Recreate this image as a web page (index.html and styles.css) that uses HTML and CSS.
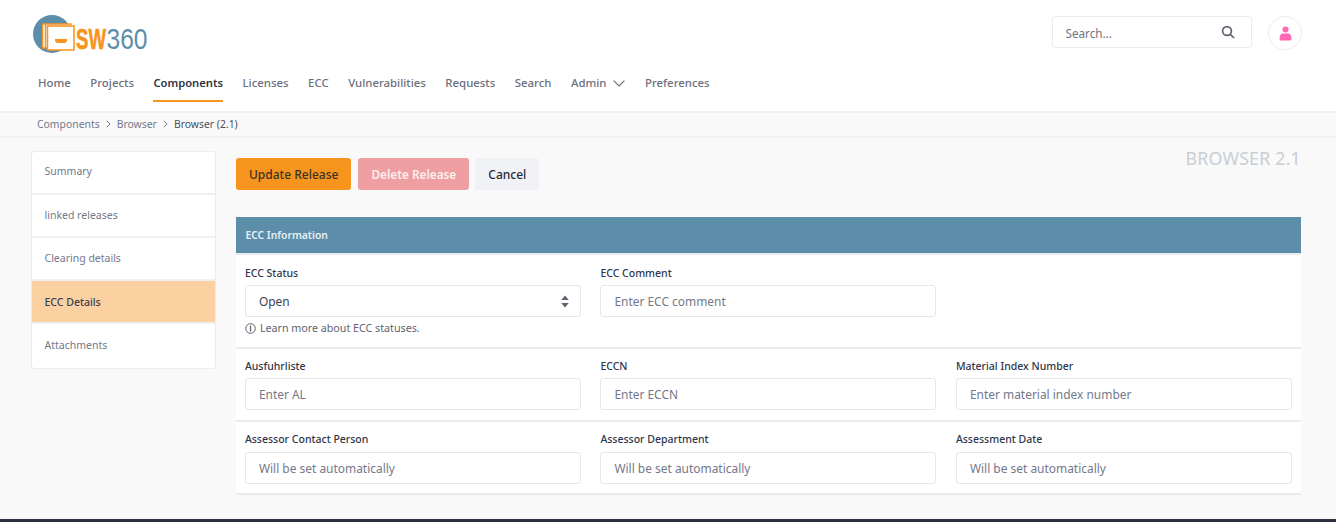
FILE: index.html
```html
<!DOCTYPE html>
<html lang="en">
<head>
<meta charset="utf-8">
<title>SW360</title>
<link rel="stylesheet" href="styles.css">
</head>
<body>
<header class="header">
  <div class="top">
    <svg class="logo" width="116" height="40" viewBox="0 0 116 40">
      <circle cx="19" cy="19" r="19" fill="#5d8ea9"/>
      <path d="M9.500 9 H38 V33 H9.500 Z" fill="#f7f3ec" stroke="#f7941d" stroke-width="1.300"/>
      <path d="M12.500 9 V33" stroke="#f7941d" stroke-width="1.300"/>
      <path d="M14.500 11 H41 V35 H14.500 Z" fill="#fff" stroke="#f7941d" stroke-width="1.500"/>
      <path d="M22 24 H34 V25 Q34 28 31 28 H25 Q22 28 22 25 Z" fill="#f7941d"/>
      <text class="logo-sw" transform="translate(43 34) scale(.62 1)">SW</text>
      <text class="logo-num" transform="translate(73.500 34) scale(.82 1)">360</text>
    </svg>
    <div class="top-right">
      <div class="search">
        <span class="search-text">Search...</span>
        <svg width="14" height="14" viewBox="0 0 14 14" fill="none" stroke="#5f6370" stroke-width="1.700"><circle cx="6" cy="6" r="4.400"/><path d="M9.300 9.300 L13 13"/></svg>
      </div>
      <div class="avatar">
        <svg width="13" height="15" viewBox="0 0 13 15" fill="#ff69b4"><circle cx="6.500" cy="3.400" r="3"/><path d="M0.500 13 Q0.500 7.400 4 7.400 H9 Q12.500 7.400 12.500 13 Q12.500 14.500 11 14.500 H2 Q0.500 14.500 0.500 13 Z"/></svg>
      </div>
    </div>
  </div>
  <nav class="nav">
    <a class="nav-item">Home</a>
    <a class="nav-item">Projects</a>
    <a class="nav-item active">Components</a>
    <a class="nav-item">Licenses</a>
    <a class="nav-item">ECC</a>
    <a class="nav-item">Vulnerabilities</a>
    <a class="nav-item">Requests</a>
    <a class="nav-item">Search</a>
    <a class="nav-item">Admin
      <svg class="chev" width="12" height="7" viewBox="0 0 12 7" fill="none" stroke="#6b6f7c" stroke-width="1.200"><path d="M0.600 0.600 L6 6 L11.400 0.600"/></svg>
    </a>
    <a class="nav-item">Preferences</a>
  </nav>
</header>
<div class="crumbs">
  <span>Components</span>
  <svg width="5" height="8" viewBox="0 0 5 8" fill="none" stroke="#74788a" stroke-width="1"><path d="M0.800 0.800 L4 4 L0.800 7.200"/></svg>
  <span>Browser</span>
  <svg width="5" height="8" viewBox="0 0 5 8" fill="none" stroke="#74788a" stroke-width="1"><path d="M0.800 0.800 L4 4 L0.800 7.200"/></svg>
  <span class="crumb-current">Browser (2.1)</span>
</div>
<main class="main">
  <aside class="side">
    <a class="side-item">Summary</a>
    <a class="side-item">linked releases</a>
    <a class="side-item">Clearing details</a>
    <a class="side-item current">ECC Details</a>
    <a class="side-item">Attachments</a>
  </aside>
  <section class="content">
    <div class="toolbar">
      <div class="buttons">
        <button class="btn btn-update">Update Release</button>
        <button class="btn btn-delete">Delete Release</button>
        <button class="btn btn-cancel">Cancel</button>
      </div>
      <div class="page-title">BROWSER 2.1</div>
    </div>
    <div class="panel">
      <div class="panel-head">ECC Information</div>
      <div class="row row-status">
        <div class="field">
          <label class="label">ECC Status</label>
          <div class="control select">Open
            <svg class="updown" width="8" height="13" viewBox="0 0 8 13" fill="#5f6370"><path d="M4 0.500 L7.800 5 H0.200 Z"/><path d="M4 12.500 L7.800 8 H0.200 Z"/></svg>
          </div>
          <div class="hint">
            <svg width="11" height="11" viewBox="0 0 11 11" fill="none" stroke="#5f6370" stroke-width="1"><circle cx="5.500" cy="5.500" r="4.800"/><path d="M5.500 2.500 V8.500" stroke-width="1.300"/></svg>
            Learn more about ECC statuses.
          </div>
        </div>
        <div class="field">
          <label class="label">ECC Comment</label>
          <div class="control">Enter ECC comment</div>
        </div>
        <div class="field"></div>
      </div>
      <div class="row row-export">
        <div class="field">
          <label class="label">Ausfuhrliste</label>
          <div class="control">Enter AL</div>
        </div>
        <div class="field">
          <label class="label">ECCN</label>
          <div class="control">Enter ECCN</div>
        </div>
        <div class="field">
          <label class="label">Material Index Number</label>
          <div class="control">Enter material index number</div>
        </div>
      </div>
      <div class="row row-assess">
        <div class="field">
          <label class="label">Assessor Contact Person</label>
          <div class="control">Will be set automatically</div>
        </div>
        <div class="field">
          <label class="label">Assessor Department</label>
          <div class="control">Will be set automatically</div>
        </div>
        <div class="field">
          <label class="label">Assessment Date</label>
          <div class="control">Will be set automatically</div>
        </div>
      </div>
    </div>
  </section>
</main>
<footer class="footer"></footer>
</body>
</html>
```
FILE: styles.css
```css
* { box-sizing: border-box; }
html, body { margin: 0; padding: 0; }
body {
  width: 1336px;
  height: 522px;
  overflow: hidden;
  background: #f9f9f9;
  font-family: "Noto Sans", "Open Sans", sans-serif;
  color: #262c3c;
  display: flex;
  flex-direction: column;
}
.header {
  background: #fff;
  height: 113px;
  border-bottom: 2px solid #eff0f1;
  flex: none;
}
.top {
  height: 67px;
  padding: 15px 34px 0 33px;
  display: flex;
  justify-content: space-between;
  align-items: flex-start;
}
.logo { display: block; }
.logo-sw {
  font-family: "Liberation Sans", sans-serif;
  font-weight: 700;
  font-size: 30px;
  fill: #f7941d;
  stroke: #f7941d;
  stroke-width: 0.600px;
}
.logo-num {
  font-family: "Liberation Sans", sans-serif;
  font-size: 30px;
  fill: #5d8ea9;
}
.top-right { display: flex; gap: 16px; align-items: flex-start; padding-top: 1px; }
.search {
  width: 200px;
  height: 32px;
  border: 1px solid #ebecee;
  border-radius: 3px;
  padding: 0 16px 0 12.500px;
  display: flex;
  align-items: center;
  justify-content: space-between;
  font-size: 11.700px;
  color: #6f7382;
}
.search-text { padding-top: 1px; }
.avatar {
  width: 34px;
  height: 34px;
  border: 1px solid #ebecee;
  border-radius: 50%;
  display: flex;
  align-items: center;
  justify-content: center;
}
.nav {
  display: flex;
  gap: 19.500px;
  padding-left: 38px;
  height: 35px;
}
.nav-item {
  font-size: 11.400px;
  font-weight: 500;
  color: #6b6f7c;
  line-height: 20px;
  padding: 6px 0 9px;
  height: 35px;
  display: flex;
  align-items: flex-start;
  gap: 7px;
}
.nav-item.active {
  color: #2f3445;
  font-weight: 600;
  font-size: 11.200px;
  border-bottom: 2px solid #f7941d;
}
.chev { margin-top: 7px; }
.crumbs {
  flex: none;
  height: 25px;
  border-bottom: 2px solid #eff0f1;
  padding: 0 0 1px 37px;
  display: flex;
  align-items: center;
  gap: 6px;
  font-size: 10.400px;
  color: #74788a;
  background: #f9f9f9;
}
.crumb-current { color: #4a4f5e; }
.main {
  flex: 1;
  display: flex;
  padding: 13px 35px 0 31px;
  gap: 20px;
  min-height: 0;
}
.side {
  width: 185px;
  height: 218px;
  background: #fff;
  border: 1px solid #ebecee;
  border-radius: 3px;
  display: flex;
  flex-direction: column;
  flex: none;
  overflow: hidden;
}
.side-item {
  height: 43.330px;
  flex: none;
  display: flex;
  align-items: center;
  padding: 0 0 0 12.500px;
  font-size: 10.500px;
  color: #74788a;
  border-bottom: 2px solid #eff0f1;
}
.side-item:first-child { height: 42.500px; padding-bottom: 3px; }
.side-item:last-child { flex: 1; height: auto; border-bottom: 0; padding-bottom: 2px; }
.side-item.current {
  background: #fbd1a2;
  color: #3a3f4d;
  font-weight: 500;
}
.content { flex: 1; min-width: 0; }
.toolbar {
  display: flex;
  justify-content: space-between;
  align-items: flex-start;
  padding-top: 7px;
  height: 66px;
}
.buttons { display: flex; gap: 7px; }
.btn {
  height: 32px;
  border: 0;
  border-radius: 3px;
  padding: 0 13px;
  font-family: inherit;
  font-size: 12px;
  font-weight: 500;
}
.btn-update { background: #f7941d; color: #3b3226; }
.btn-delete { background: #ef9fa2; color: #fdeeee; font-size: 11.800px; font-weight: 600; }
.btn-cancel { background: #f1f2f6; color: #262c3c; margin-left: -1px; }
.page-title {
  font-size: 17.800px;
  color: #c9ced4;
  line-height: 1;
  margin-top: -8px;
  letter-spacing: 0.200px;
}
.panel { display: flex; flex-direction: column; }
.panel-head {
  height: 36px;
  background: #5d8ea9;
  color: #e9f0f4;
  font-size: 10.300px;
  font-weight: 600;
  display: flex;
  align-items: center;
  padding-left: 9.500px;
}
.row {
  background: #fff;
  border-top: 2px solid #eaebef;
  display: grid;
  grid-template-columns: repeat(3, 336px);
  column-gap: 19.500px;
  padding: 10px 8px 2px 8.900px;
}
.row-status { height: 94px; padding-top: 11px; }
.row-export { height: 73px; }
.row-assess { height: 75px; border-bottom: 2px solid #eaebef; }
.label {
  display: block;
  font-size: 10.500px;
  font-weight: 500;
  color: #30364a;
  line-height: 14px;
  margin-bottom: 5px;
}
.row-assess .label { margin-bottom: 6px; }
.control {
  height: 32px;
  border: 1px solid #e6e7eb;
  border-radius: 3px;
  background: #fff;
  padding: 0 13px;
  display: flex;
  align-items: center;
  font-size: 11.950px;
  color: #74788a;
}
.select {
  color: #3b4154;
  justify-content: space-between;
  padding-right: 11px;
}
.hint {
  display: flex;
  align-items: center;
  gap: 4px;
  font-size: 10.700px;
  color: #5f6370;
  margin-top: 5px;
  line-height: 13px;
}
.footer {
  flex: none;
  height: 3px;
  background: #2d3140;
}
```
